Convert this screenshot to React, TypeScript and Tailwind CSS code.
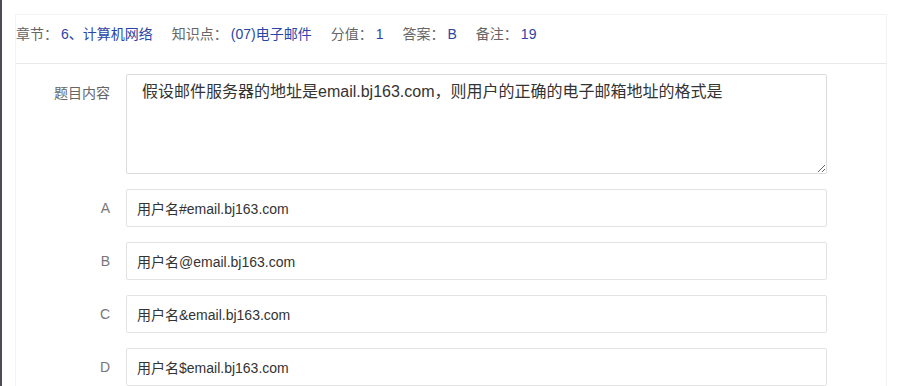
import React from 'react';

const meta = [
  { label: '章节：', value: '6、计算机网络' },
  { label: '知识点：', value: '(07)电子邮件' },
  { label: '分值：', value: '1' },
  { label: '答案：', value: 'B' },
  { label: '备注：', value: '19' },
];

const options = [
  { key: 'A', text: '用户名#email.bj163.com' },
  { key: 'B', text: '用户名@email.bj163.com' },
  { key: 'C', text: '用户名&email.bj163.com' },
  { key: 'D', text: '用户名$email.bj163.com' },
];

const font = "font-['Liberation_Sans','Noto_Sans_CJK_SC',sans-serif]";

export default function App() {
  return (
    <div className={`h-screen overflow-hidden bg-white flex ${font}`}>
      <div className="w-[2px] bg-[#4a4d55] shrink-0" />
      <div className="flex-1 pl-[13px] pr-[14px] pt-[14px]">
        <div className="border-l border-t border-r border-[#f3f3f3] h-[380px]">
          {/* header */}
          <div className="h-[49px] pt-[9px] border-b border-[#e8e8e8] flex text-[14px] leading-[20px]">
            {meta.map((m) => (
              <div key={m.label} className="flex mr-[19px]">
                <span className="text-[#666]">{m.label}</span>
                <span className="text-[#2b45a6] ml-[3px]">{m.value}</span>
              </div>
            ))}
          </div>

          {/* question */}
          <div className="pt-[10px] pr-[59px] flex flex-col gap-[15px]">
            <div className="flex">
              <div className="w-[94px] shrink-0 text-right text-[14px] leading-[20px] text-[#666] pt-[9px]">
                题目内容
              </div>
              <textarea
                className="ml-[16px] flex-1 h-[100px] border border-[#dcdcdc] rounded-[2px] pl-[15px] pr-3 pt-[5px] text-[16px] leading-[24px] text-[#333] outline-none"
                defaultValue="假设邮件服务器的地址是email.bj163.com，则用户的正确的电子邮箱地址的格式是"
              />
            </div>
            {options.map((o) => (
              <div key={o.key} className="flex items-center">
                <div className="w-[94px] shrink-0 text-right text-[14px] text-[#777]">{o.key}</div>
                <input
                  className="ml-[16px] flex-1 h-[38px] border border-[#e3e3e3] rounded-[2px] pl-[10px] text-[14px] text-[#333] outline-none"
                  defaultValue={o.text}
                />
              </div>
            ))}
          </div>
        </div>
      </div>
    </div>
  );
}
